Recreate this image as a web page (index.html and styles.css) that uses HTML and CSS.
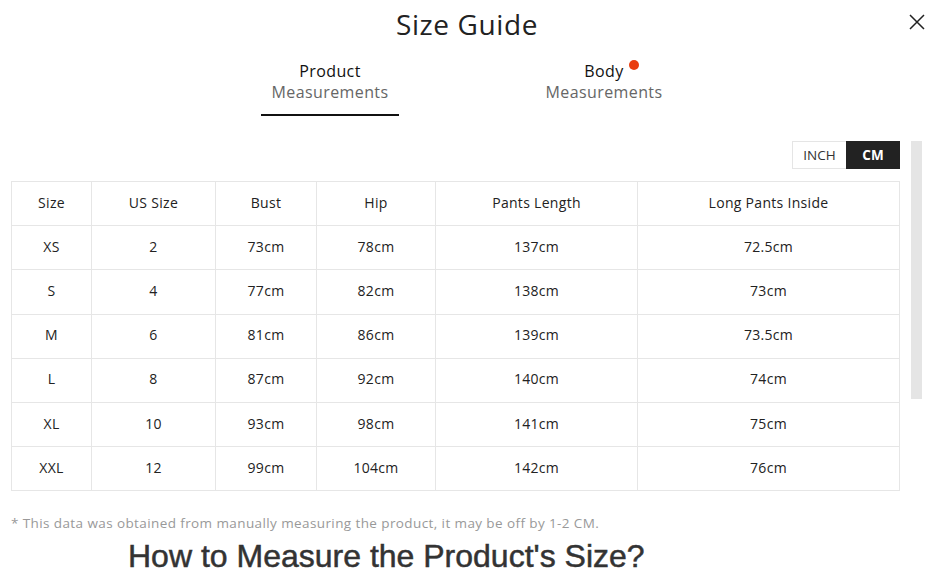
FILE: index.html
```html
<!DOCTYPE html>
<html>
<head>
<meta charset="utf-8">
<link rel="stylesheet" href="styles.css">
</head>
<body>
<div class="modal">
  <header class="head">
    <h1 class="title">Size Guide</h1>
    <button class="close" aria-label="Close">
      <svg width="16" height="16" viewBox="0 0 16 16"><path d="M1 1L15 15M15 1L1 15" stroke="#222" stroke-width="1.5" fill="none"/></svg>
    </button>
  </header>
  <nav class="tabs">
    <div class="tab active"><span class="t1">Product</span><span class="t2">Measurements</span></div>
    <div class="tab"><span class="t1">Body<i class="dot"></i></span><span class="t2">Measurements</span></div>
  </nav>
  <div class="body">
    <div class="content">
      <div class="units">
        <span class="unit">INCH</span><span class="unit on">CM</span>
      </div>
      <table class="grid">
        <colgroup>
          <col style="width:80px"><col style="width:124px"><col style="width:101px"><col style="width:119px"><col style="width:202px"><col>
        </colgroup>
        <tr><td>Size</td><td>US Size</td><td>Bust</td><td>Hip</td><td>Pants Length</td><td>Long Pants Inside</td></tr>
        <tr><td>XS</td><td>2</td><td>73cm</td><td>78cm</td><td>137cm</td><td>72.5cm</td></tr>
        <tr><td>S</td><td>4</td><td>77cm</td><td>82cm</td><td>138cm</td><td>73cm</td></tr>
        <tr><td>M</td><td>6</td><td>81cm</td><td>86cm</td><td>139cm</td><td>73.5cm</td></tr>
        <tr><td>L</td><td>8</td><td>87cm</td><td>92cm</td><td>140cm</td><td>74cm</td></tr>
        <tr><td>XL</td><td>10</td><td>93cm</td><td>98cm</td><td>141cm</td><td>75cm</td></tr>
        <tr><td>XXL</td><td>12</td><td>99cm</td><td>104cm</td><td>142cm</td><td>76cm</td></tr>
      </table>
      <p class="note">* This data was obtained from manually measuring the product, it may be off by 1-2 CM.</p>
      <h2 class="how">How to Measure the Product's Size?</h2>
    </div>
    <div class="scroll"><div class="thumb"></div></div>
  </div>
</div>
</body>
</html>
```
FILE: styles.css
```css
* { box-sizing: border-box; }
html, body { margin: 0; padding: 0; background: #fff; }
body { font-family: "Open Sans", "Noto Sans", sans-serif; color: #222; width: 942px; height: 585px; overflow: hidden; }
.modal { position: relative; }
.head { height: 51px; display: flex; justify-content: center; align-items: flex-start; padding-right: 8px; }
.title { margin: 6px 0 0; font-size: 28px; font-weight: 400; color: #222; letter-spacing: 0.6px; line-height: 36px; }
.close { position: absolute; right: 17px; top: 14px; border: 0; background: none; padding: 0; width: 16px; height: 16px; }
.tabs { display: flex; justify-content: center; gap: 136px; padding-right: 8px; }
.tab { display: flex; flex-direction: column; align-items: center; width: 138px; height: 65px; padding-top: 10px; }
.tab.active { border-bottom: 2px solid #111; }
.t1 { font-size: 16px; color: #111; line-height: 21px; position: relative; letter-spacing: 0.4px; }
.t2 { font-size: 16px; color: #666; line-height: 21px; letter-spacing: 0.4px; }
.dot { position: absolute; right: -15px; top: -1px; width: 10px; height: 10px; border-radius: 50%; background: #e93c0e; }
.body { display: flex; padding: 25px 0 0 11px; }
.content { width: 889px; }
.units { display: flex; justify-content: flex-end; height: 28px; margin-bottom: 12px; }
.unit { width: 54px; display: flex; align-items: center; justify-content: center; font-size: 13.5px; color: #333; border: 1px solid #e5e5e5; border-right: 0; }
.unit.on { background: #222; color: #fff; font-weight: 700; border: 1px solid #222; }
.grid { width: 889px; border-collapse: collapse; table-layout: fixed; }
.grid td { border: 1px solid #e6e6e6; height: 44.2px; text-align: center; font-size: 14px; letter-spacing: 0.3px; color: #222; padding: 0 0 3px; }
.note { margin: 23px 0 0; font-size: 13.5px; letter-spacing: 0.4px; color: #999; }
.how { margin: 6px 0 0; font-family: "Liberation Sans", Arial, sans-serif; font-weight: 400; font-size: 32px; color: #333; padding-left: 117px; line-height: 36px; -webkit-text-stroke: 0.5px #333; }
.scroll { width: 11px; margin-left: 11px; }
.thumb { width: 11px; height: 258px; background: #e5e5e5; }
```
